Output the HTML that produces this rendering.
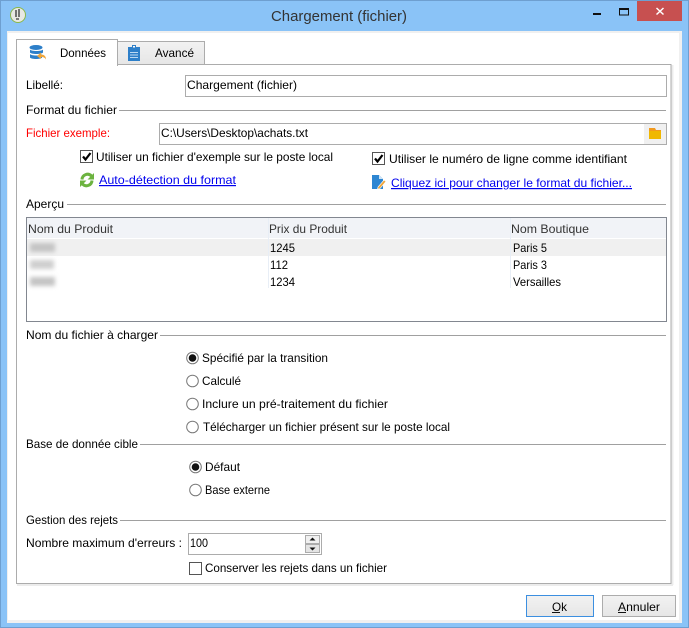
<!DOCTYPE html>
<html><head><meta charset="utf-8">
<style>
html,body{margin:0;padding:0;background:#8ac3f7;width:689px;height:628px;overflow:hidden}
svg{display:block;position:absolute;left:0;top:0}
text{font-family:"Liberation Sans",sans-serif;font-size:12px;fill:#000}
.l{fill:#0000ee}
</style></head><body>
<svg width="689" height="628" viewBox="0 0 689 628" xmlns="http://www.w3.org/2000/svg">
<defs><filter id="b" x="-30%" y="-80%" width="160%" height="260%"><feGaussianBlur stdDeviation="2"/></filter>
<linearGradient id="g" x1="0" y1="0" x2="0" y2="1"><stop offset="0" stop-color="#f2f2f2"/><stop offset="1" stop-color="#e6e6e6"/></linearGradient></defs>
<rect x="0" y="0" width="689" height="628" fill="#8ac3f7"/>
<rect x="0.5" y="0.5" width="688" height="627" fill="none" stroke="#6e9fd0"/>
<rect x="7" y="31" width="675" height="592" fill="#f0f0f0"/>
<rect x="8" y="33" width="671" height="587" fill="#fff"/>
<!-- title bar -->
<circle cx="18" cy="15" r="7.500" fill="#e8e8e4" stroke="#8ab84a"/>
<path d="M16 10v7M19 9v8M16 19h3" stroke="#555" stroke-width="1.600" fill="none"/>
<text x="271" y="21" textLength="136" lengthAdjust="spacingAndGlyphs" style="font-size:15px;fill:#333">Chargement (fichier)</text>
<rect x="593" y="13" width="8" height="2" fill="#111"/>
<rect x="619.500" y="8.500" width="9" height="6.500" fill="none" stroke="#111"/><rect x="619" y="8" width="10" height="2" fill="#111"/>
<rect x="637" y="1" width="45" height="20" fill="#c75050"/>
<path d="M656.500 8l7 6.500M663.500 8l-7 6.500" stroke="#fff" stroke-width="1.500"/>
<!-- panel -->
<rect x="671" y="65" width="2.500" height="520" fill="#ececec"/>
<rect x="17" y="584" width="656" height="2" fill="#ececec"/>
<rect x="16.500" y="64.500" width="654.500" height="519" fill="#fff" stroke="#acacac"/>
<!-- tabs -->
<rect x="117.500" y="41.500" width="87" height="23" fill="url(#g)" stroke="#acacac"/>
<rect x="16.500" y="39.500" width="101" height="26" fill="#fff" stroke="#acacac"/>
<rect x="17" y="63" width="100" height="3" fill="#fff"/>
<ellipse cx="36" cy="47.500" rx="6.500" ry="2.500" fill="#2d7fc9"/>
<path d="M30 49.500c1 2 12 2 13 0v3c-1 2-12 2-13 0z M30 54c1 2 11 2 12 0v3.500c-1 2-11 2-12 0z" fill="#2d7fc9"/>
<path d="M37 56l4-3.500v2c3 0 5 1.500 5 5-1-2-3-2.500-5-2.500v2z" fill="#f0a63a"/>
<text x="60" y="57" textLength="46" lengthAdjust="spacingAndGlyphs">Données</text>
<rect x="128" y="47" width="12" height="14" fill="#2d7fc9"/>
<rect x="132" y="45" width="4" height="4" fill="#2d7fc9"/><rect x="133" y="46" width="2" height="1.500" fill="#fff"/>
<path d="M130 52.500h8M130 55h8M130 57.500h8" stroke="#bcd9f2"/>
<text x="155" y="57" textLength="39" lengthAdjust="spacingAndGlyphs">Avancé</text>
<!-- libellé -->
<text x="26" y="89" textLength="37" lengthAdjust="spacingAndGlyphs">Libellé:</text>
<rect x="185.500" y="75.500" width="481" height="21" fill="#fff" stroke="#acacac"/>
<text x="187" y="89" textLength="110" lengthAdjust="spacingAndGlyphs">Chargement (fichier)</text>
<!-- format -->
<text x="26" y="114" textLength="91" lengthAdjust="spacingAndGlyphs">Format du fichier</text>
<rect x="119" y="110" width="547" height="1" fill="#a0a0a0"/>
<text x="26" y="137" textLength="84" lengthAdjust="spacingAndGlyphs" style="fill:#f00">Fichier exemple:</text>
<rect x="159.500" y="123.500" width="507" height="21" fill="#fff" stroke="#acacac"/>
<rect x="644" y="124" width="22" height="20" fill="#f0f0f0"/>
<path d="M649 128h6l1 2h5v2h-12z" fill="#f29a1e"/><rect x="649" y="131" width="12" height="8" fill="#f0b800"/>
<text x="161" y="137" textLength="147" lengthAdjust="spacingAndGlyphs">C:\Users\Desktop\achats.txt</text>
<rect x="80.500" y="150.500" width="12" height="12" fill="#fff" stroke="#555"/>
<path d="M83 156.500l2.500 3 5-6.500" fill="none" stroke="#000" stroke-width="2.200"/>
<text x="96" y="161" textLength="237" lengthAdjust="spacingAndGlyphs">Utiliser un fichier d'exemple sur le poste local</text>
<rect x="372.500" y="152.500" width="12" height="12" fill="#fff" stroke="#555"/>
<path d="M375 158.500l2.500 3 5-6.500" fill="none" stroke="#000" stroke-width="2.200"/>
<text x="389" y="163" textLength="238" lengthAdjust="spacingAndGlyphs">Utiliser le numéro de ligne comme identifiant</text>
<path d="M82 179.500a5.500 5.500 0 0 1 9.500-3.500M92 180.500a5.500 5.500 0 0 1-9.500 3.500" fill="none" stroke="#6cb33f" stroke-width="3"/>
<path d="M94 173v6.500h-6.500zM80 187v-6.500h6.500z" fill="#6cb33f"/>
<text class="l" x="99" y="184" textLength="137" lengthAdjust="spacingAndGlyphs" text-decoration="underline">Auto-détection du format</text>
<path d="M372 175h7l4 4v10h-11z" fill="#2d86d2"/><path d="M379 175v4h4z" fill="#cfe4f6"/>
<path d="M378 187l6-7 2 1.500-6 7-2.500 .5z" fill="#f0a63a" stroke="#fff" stroke-width=".6"/>
<text class="l" x="391" y="187" textLength="241" lengthAdjust="spacingAndGlyphs" text-decoration="underline">Cliquez ici pour changer le format du fichier...</text>
<!-- aperçu -->
<text x="26" y="208" textLength="38" lengthAdjust="spacingAndGlyphs">Aperçu</text>
<rect x="67" y="204" width="599" height="1" fill="#a0a0a0"/>
<rect x="26.500" y="217.500" width="640" height="104" fill="#fff" stroke="#828790"/>
<rect x="27" y="218" width="639" height="20" fill="#f1f3f7"/>
<rect x="27" y="239" width="639" height="17" fill="#f0f0f0"/>
<rect x="268" y="218" width="1" height="70" fill="#e8eef6"/>
<rect x="510" y="218" width="1" height="70" fill="#e8eef6"/>
<text x="28" y="233" textLength="85" lengthAdjust="spacingAndGlyphs" style="fill:#333">Nom du Produit</text>
<text x="269" y="233" textLength="78" lengthAdjust="spacingAndGlyphs" style="fill:#333">Prix du Produit</text>
<text x="511" y="233" textLength="78" lengthAdjust="spacingAndGlyphs" style="fill:#333">Nom Boutique</text>
<rect x="30" y="243" width="25" height="9" fill="#c4c4c4" filter="url(#b)"/>
<rect x="30" y="260" width="24" height="9" fill="#cfcfcf" filter="url(#b)"/>
<rect x="30" y="277" width="25" height="9" fill="#c4c4c4" filter="url(#b)"/>
<text x="270" y="252" textLength="25" lengthAdjust="spacingAndGlyphs">1245</text>
<text x="270" y="269" textLength="18" lengthAdjust="spacingAndGlyphs">112</text>
<text x="270" y="286" textLength="25" lengthAdjust="spacingAndGlyphs">1234</text>
<text x="513" y="252" textLength="34" lengthAdjust="spacingAndGlyphs">Paris 5</text>
<text x="513" y="269" textLength="34" lengthAdjust="spacingAndGlyphs">Paris 3</text>
<text x="513" y="286" textLength="48" lengthAdjust="spacingAndGlyphs">Versailles</text>
<!-- nom -->
<text x="26" y="339" textLength="132" lengthAdjust="spacingAndGlyphs">Nom du fichier à charger</text>
<rect x="160" y="335" width="506" height="1" fill="#a0a0a0"/>
<g fill="#fff" stroke="#777">
<circle cx="192.500" cy="358" r="5.800"/><circle cx="192.500" cy="381" r="5.800"/><circle cx="192.500" cy="404" r="5.800"/><circle cx="192.500" cy="427" r="5.800"/>
<circle cx="195.500" cy="467" r="5.800"/><circle cx="195.500" cy="490" r="5.800"/></g>
<circle cx="192.500" cy="358" r="3.800" fill="#111"/><circle cx="195.500" cy="467" r="3.800" fill="#111"/>
<text x="202" y="362" textLength="126" lengthAdjust="spacingAndGlyphs">Spécifié par la transition</text>
<text x="202" y="385" textLength="39" lengthAdjust="spacingAndGlyphs">Calculé</text>
<text x="202" y="408" textLength="186" lengthAdjust="spacingAndGlyphs">Inclure un pré-traitement du fichier</text>
<text x="203" y="431" textLength="247" lengthAdjust="spacingAndGlyphs">Télécharger un fichier présent sur le poste local</text>
<text x="26" y="448" textLength="112" lengthAdjust="spacingAndGlyphs">Base de donnée cible</text>
<rect x="140" y="444" width="526" height="1" fill="#a0a0a0"/>
<text x="205" y="471" textLength="35" lengthAdjust="spacingAndGlyphs">Défaut</text>
<text x="205" y="494" textLength="65" lengthAdjust="spacingAndGlyphs">Base externe</text>
<!-- rejets -->
<text x="26" y="524" textLength="92" lengthAdjust="spacingAndGlyphs">Gestion des rejets</text>
<rect x="120" y="520" width="546" height="1" fill="#a0a0a0"/>
<text x="26" y="547" textLength="156" lengthAdjust="spacingAndGlyphs">Nombre maximum d'erreurs :</text>
<rect x="188.500" y="533.500" width="133" height="21" fill="#fff" stroke="#acacac"/>
<text x="190" y="547" textLength="18" lengthAdjust="spacingAndGlyphs">100</text>
<rect x="305.500" y="535.500" width="14" height="8" fill="#f0f0f0" stroke="#acacac"/>
<rect x="305.500" y="544.500" width="14" height="8" fill="#e4e4e4" stroke="#acacac"/>
<path d="M312.500 537.500l3 3h-6zM312.500 550.500l3-3h-6z" fill="#111"/>
<rect x="189.500" y="562.500" width="12" height="12" fill="#fff" stroke="#555"/>
<text x="205" y="572" textLength="182" lengthAdjust="spacingAndGlyphs">Conserver les rejets dans un fichier</text>
<!-- buttons -->
<rect x="526.500" y="595.500" width="67" height="21" fill="url(#g)" stroke="#3c8fe0"/>
<text x="552" y="611" textLength="15" lengthAdjust="spacingAndGlyphs">Ok</text><rect x="552" y="612" width="8" height="1" fill="#111"/>
<rect x="602.500" y="595.500" width="73" height="21" fill="url(#g)" stroke="#acacac"/>
<text x="618" y="611" textLength="42" lengthAdjust="spacingAndGlyphs">Annuler</text><rect x="618" y="612" width="8" height="1" fill="#111"/>
</svg>
</body></html>
